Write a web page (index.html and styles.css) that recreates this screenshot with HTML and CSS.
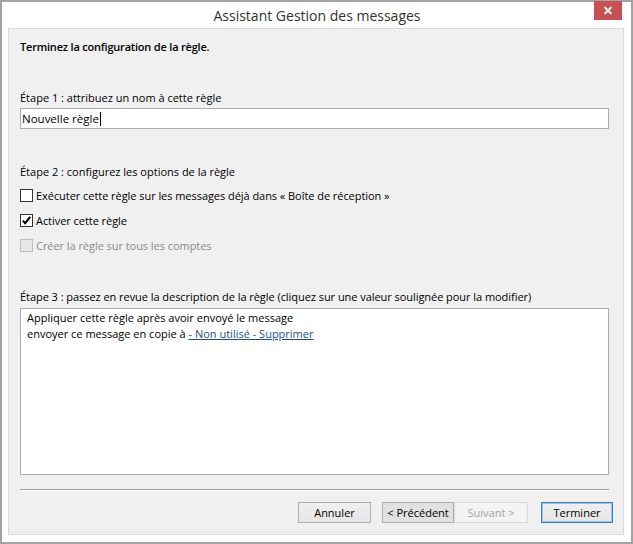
FILE: index.html
```html
<!DOCTYPE html>
<html lang="fr">
<head>
    <meta charset="UTF-8">
    <meta name="viewport" content="width=device-width, initial-scale=1.0">
    <title>Assistant Gestion des messages</title>
    <link rel="stylesheet" href="styles.css">
</head>
<body>
    <div class="window">
        <div class="titlebar">
            <span class="title">Assistant Gestion des messages</span>
            <button class="close-btn" aria-label="Fermer">
                <svg width="10" height="9" viewBox="0 0 10 9">
                    <path d="M1.5 1 L8.5 8 M8.5 1 L1.5 8" stroke="#fff" stroke-width="1.8" fill="none"/>
                </svg>
            </button>
        </div>
        <div class="client">
            <p class="heading">Terminez la configuration de la règle.</p>

            <div class="step step-name">
                <p class="step-label">Étape 1 : attribuez un nom à cette règle</p>
                <div class="textbox">Nouvelle règle<span class="caret"></span></div>
            </div>

            <div class="step step-options">
                <p class="step-label">Étape 2 : configurez les options de la règle</p>
                <div class="option">
                    <span class="checkbox"></span>
                    <span>Exécuter cette règle sur les messages déjà dans « Boîte de réception »</span>
                </div>
                <div class="option">
                    <span class="checkbox checked">
                        <svg width="11" height="11" viewBox="0 0 11 11">
                            <path d="M1.8 5.6 L4.2 8.2 L9.2 1.8" stroke="#000" stroke-width="2" fill="none"/>
                        </svg>
                    </span>
                    <span>Activer cette règle</span>
                </div>
                <div class="option disabled">
                    <span class="checkbox"></span>
                    <span>Créer la règle sur tous les comptes</span>
                </div>
            </div>

            <div class="step step-desc">
                <p class="step-label">Étape 3 : passez en revue la description de la règle (cliquez sur une valeur soulignée pour la modifier)</p>
                <div class="description">
                    <p>Appliquer cette règle après avoir envoyé le message</p>
                    <p>envoyer ce message en copie à <a href="#" class="value-link">- Non utilisé - Supprimer</a></p>
                </div>
            </div>

            <div class="separator"></div>

            <div class="buttons">
                <button class="btn">Annuler</button>
                <div class="btn-pair">
                    <button class="btn btn-pressed">&lt; Précédent</button>
                    <button class="btn" disabled>Suivant &gt;</button>
                </div>
                <button class="btn btn-default">Terminer</button>
            </div>
        </div>
    </div>
</body>
</html>
```

FILE: styles.css
```css
* {
    margin: 0;
    padding: 0;
    box-sizing: border-box;
}
body {
    font-family: "Open Sans", "Noto Sans", sans-serif;
    font-size: 11px;
    color: #000;
    background: #fff;
}
.window {
    position: relative;
    width: 633px;
    height: 544px;
    border: 2px solid #a3a3a3;
    background: #fff;
    padding: 0 7px 7px 6px;
    display: flex;
    flex-direction: column;
}
.titlebar {
    height: 26px;
    display: flex;
    align-items: center;
    justify-content: center;
}
.title {
    font-size: 14px;
    color: #333;
    margin-left: 2px;
}
.close-btn {
    position: absolute;
    left: 592px;
    top: -1px;
    width: 28px;
    height: 19px;
    border: none;
    background: #c75050;
    display: flex;
    align-items: center;
    justify-content: center;
}
.client {
    flex: 1;
    background: #f0f0f0;
    border: 1px solid #dadada;
    padding: 10px 10px 0 11px;
    display: flex;
    flex-direction: column;
}
.heading {
    line-height: 16px;
    font-weight: 600;
    letter-spacing: -0.2px;
}
.step {
    margin-right: 4px;
    margin-top: 35px;
}
.step-label {
    line-height: 16px;
}
.textbox {
    margin-top: 2px;
    height: 21px;
    background: #fff;
    border: 1px solid #abadb3;
    padding-left: 1px;
    line-height: 19px;
    font-size: 11.5px;
    display: flex;
    align-items: center;
}
.caret {
    display: inline-block;
    width: 1px;
    height: 14px;
    background: #000;
    margin-left: 1px;
}
.option {
    display: flex;
    align-items: center;
    height: 16px;
    margin-top: 9px;
    letter-spacing: -0.05px;
}
.option:first-of-type {
    margin-top: 7px;
}
.checkbox {
    width: 13px;
    height: 13px;
    border: 1px solid #333;
    background: #fff;
    margin-right: 3px;
    display: flex;
    align-items: center;
    justify-content: center;
}
.option.disabled {
    color: #8b8b8b;
}
.option.disabled .checkbox {
    border-color: #bcbcbc;
    background: #e6e6e6;
}
.step-desc {
    margin-top: 36px;
}
.step-desc .step-label {
    letter-spacing: -0.05px;
}
.description {
    margin-top: 3px;
    height: 167px;
    background: #fff;
    border: 1px solid #abadb3;
    padding: 1px 0 0 6px;
}
.description p {
    line-height: 16px;
}
.value-link {
    color: #1f4e8c;
    text-decoration: underline;
}
.separator {
    margin: 14px 4px 0 0;
    height: 2px;
    border-top: 1px solid #a0a0a0;
    border-bottom: 1px solid #fff;
}
.buttons {
    margin-top: 11px;
    display: flex;
    justify-content: flex-end;
    gap: 11px;
}
.btn-pair {
    display: flex;
    margin-right: 2px;
}
.btn {
    width: 73px;
    height: 21px;
    font-family: inherit;
    font-size: 11px;
    color: #000;
    background: linear-gradient(#f0f0f0, #e5e5e5);
    border: 1px solid #acacac;
}
.btn-pressed {
    width: 72px;
    background: #e1e1e1;
    border-color: #adadad;
}
.btn:disabled {
    width: 74px;
    color: #a2a2a2;
    background: #f4f4f4;
    border-color: #d9d9d9;
}
.btn-default {
    width: 72px;
    border-color: #3c7fb1;
    box-shadow: inset 0 0 0 1px #9ec6ec;
}
```
